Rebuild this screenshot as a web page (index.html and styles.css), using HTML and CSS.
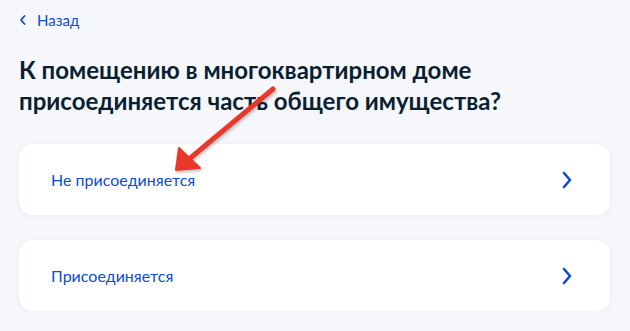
FILE: index.html
```html
<!DOCTYPE html>
<html lang="ru">
<head>
<meta charset="utf-8">
<link rel="stylesheet" href="styles.css">
</head>
<body>
<div class="page">
  <a class="back" href="#">
    <svg class="back-icon" width="8" height="12" viewBox="0 0 8 12"><path d="M5.5 2 L2 6 L5.5 10" fill="none" stroke="#0d4cd3" stroke-width="1.8" stroke-linecap="round" stroke-linejoin="round"/></svg>
    <span>Назад</span>
  </a>
  <h1 class="title">К помещению в многоквартирном доме присоединяется часть общего имущества?</h1>
  <div class="options">
    <a class="option" href="#">
      <span>Не присоединяется</span>
      <svg class="chev" width="10" height="18" viewBox="0 0 10 18"><path d="M2 2 L8 9 L2 16" fill="none" stroke="#0d4cd3" stroke-width="2.6" stroke-linecap="round" stroke-linejoin="round"/></svg>
    </a>
    <a class="option" href="#">
      <span>Присоединяется</span>
      <svg class="chev" width="10" height="18" viewBox="0 0 10 18"><path d="M2 2 L8 9 L2 16" fill="none" stroke="#0d4cd3" stroke-width="2.6" stroke-linecap="round" stroke-linejoin="round"/></svg>
    </a>
  </div>
</div>
<svg class="arrow" width="630" height="331" viewBox="0 0 630 331">
  <defs>
    <filter id="sh" x="-20%" y="-20%" width="140%" height="140%">
      <feDropShadow dx="1" dy="2" stdDeviation="1.5" flood-color="#000" flood-opacity="0.25"/>
    </filter>
  </defs>
  <g filter="url(#sh)" fill="#e8372c" stroke="#e8372c">
    <line x1="273" y1="89" x2="188" y2="160" stroke-width="5" stroke-linecap="round"/>
    <polygon points="176,170 179,148 200,168" stroke-width="2" stroke-linejoin="round"/>
  </g>
</svg>
</body>
</html>
```
FILE: styles.css
```css
html, body {
  margin: 0;
  padding: 0;
  background: #f5f7fb;
  font-family: Lato, "Noto Sans", sans-serif;
}
.page {
  padding: 10px 20px 0 19px;
}
.back {
  display: flex;
  align-items: center;
  gap: 10px;
  color: #0d4cd3;
  text-decoration: none;
  font-size: 15px;
  height: 20px;
}
.back-icon {
  display: block;
}
.title {
  margin: 24px 0 0 0;
  font-size: 24px;
  line-height: 31px;
  font-weight: 700;
  color: #0b1f33;
  max-width: 540px;
}
.options {
  display: flex;
  flex-direction: column;
  gap: 25px;
  margin-top: 28px;
}
.option {
  display: flex;
  align-items: center;
  justify-content: space-between;
  height: 71px;
  box-sizing: border-box;
  padding: 0 38px 0 32px;
  background: #fff;
  border-radius: 14px;
  box-shadow: 0 1px 6px rgba(30, 60, 120, 0.06);
  color: #0d4cd3;
  text-decoration: none;
  font-size: 16px;
}
.chev {
  display: block;
}
.arrow {
  position: absolute;
  left: 0;
  top: 0;
  pointer-events: none;
}
```
